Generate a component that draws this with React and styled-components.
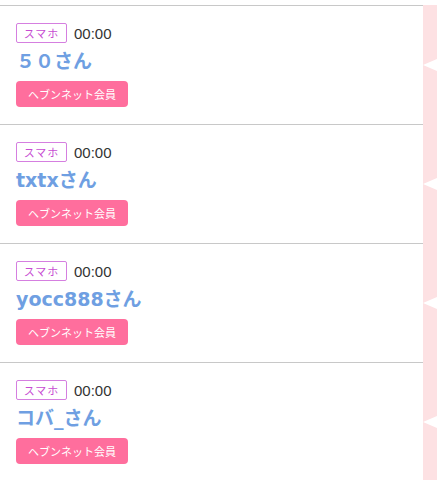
import React from "react";
import styled, { createGlobalStyle } from "styled-components";

const GlobalStyle = createGlobalStyle`
  body {
    margin: 0;
    background: #fff;
    font-family: "Liberation Sans", "Noto Sans CJK JP", sans-serif;
  }
`;

const users = [
  { name: "５０さん", time: "00:00" },
  { name: "txtxさん", time: "00:00" },
  { name: "yocc888さん", time: "00:00" },
  { name: "コバ_さん", time: "00:00" },
];

const App = () => {
  return (
    <>
      <GlobalStyle />
      <Page>
        {users.map((user, index) => (
          <Row key={index}>
            <Content>
              <MetaLine>
                <DeviceBadge>スマホ</DeviceBadge>
                <Time>{user.time}</Time>
              </MetaLine>
              <UserName>{user.name}</UserName>
              <MemberButton>ヘブンネット会員</MemberButton>
            </Content>
            <Side />
          </Row>
        ))}
      </Page>
    </>
  );
};

export default App;

const Page = styled.div`
  padding-top: 5px;
  width: 437px;
`;

const Row = styled.div`
  display: flex;
  height: 119px;
`;

const Content = styled.div`
  flex: 1;
  border-top: 1px solid #c8c8c8;
  padding: 17px 0 0 16px;
  display: flex;
  flex-direction: column;
  align-items: flex-start;
`;

const Side = styled.div`
  width: 14px;
  background-color: #fde1e3;
  position: relative;

  &::before {
    content: "";
    position: absolute;
    right: 0;
    top: 54px;
    border-style: solid;
    border-width: 6px 14px 6px 0;
    border-color: transparent #fff transparent transparent;
  }
`;

const MetaLine = styled.div`
  display: flex;
  align-items: center;
  height: 20px;
`;

const DeviceBadge = styled.span`
  box-sizing: border-box;
  width: 51px;
  height: 20px;
  border: 1px solid #d57fe0;
  border-radius: 2px;
  color: #c74bd2;
  font-family: "Noto Sans CJK JP", sans-serif;
  font-size: 11px;
  letter-spacing: 1px;
  display: flex;
  align-items: center;
  justify-content: center;
`;

const Time = styled.span`
  margin-left: 7px;
  font-size: 15px;
  color: #333;
`;

const UserName = styled.div`
  margin-top: 5px;
  font-family: "DejaVu Sans", "Noto Sans CJK JP", sans-serif;
  font-size: 19px;
  font-weight: bold;
  color: #6f9fe2;
  line-height: 26px;
`;

const MemberButton = styled.button`
  margin-top: 7px;
  width: 112px;
  height: 26px;
  border: none;
  border-radius: 4px;
  background-color: #ff6e9d;
  color: #fff;
  font-family: "Noto Sans CJK JP", sans-serif;
  font-size: 11px;
  padding: 0;
`;
